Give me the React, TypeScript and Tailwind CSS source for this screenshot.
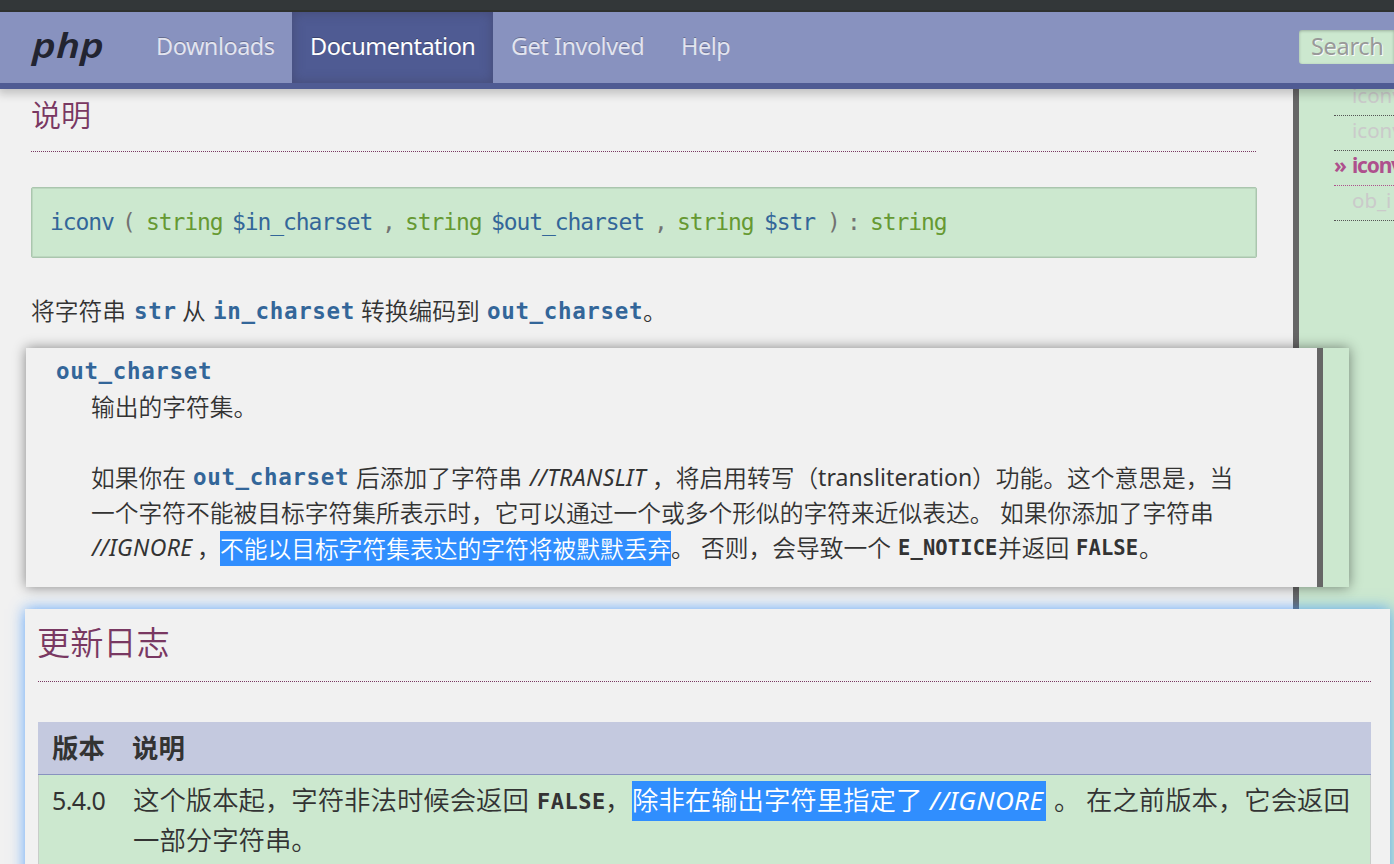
import React from "react";

type RunProps = { c?: string; children: React.ReactNode };

function Run({ c = "", children }: RunProps) {
  return <span className={"shrink-0 whitespace-pre " + c}>{children}</span>;
}

const cjk = "font-['Noto_Sans_CJK_SC',sans-serif]";
const latin = "font-['Noto_Sans',sans-serif]";
const mono = "font-['DejaVu_Sans_Mono',monospace]";
const body = cjk + " font-[350] text-[23.75px]";
const param = mono + " font-bold text-[22.5px] tracking-[0.65px] text-[#336699]";
const constant = mono + " font-bold text-[20.5px] tracking-[0.1px]";
const code = mono + " text-[23px] tracking-[-1.1px]";
const italic = latin + " italic font-normal";

function NavItem({ label, c }: { label: string; c: string }) {
  return (
    <a className={"flex h-[71px] shrink-0 items-center pb-[2px] pl-[18px] whitespace-nowrap text-[23.5px] [text-shadow:0_-1px_0_rgba(0,0,0,0.25)] " + latin + " " + c}>
      {label}
    </a>
  );
}

function Header() {
  return (
    <header className="relative z-10 shrink-0 shadow-[0_3px_9px_2px_rgba(0,0,0,0.2)]">
      <div className="h-3 border-b-2 border-[#2e312f] bg-[#333739]" />
      <nav className="flex h-[77px] border-b-[6px] border-[#4f5b93] bg-[#8892bf]">
        <div className="w-[138px] shrink-0 pl-[32px] font-['Noto_Sans',sans-serif] text-[35px] leading-[65px] font-semibold text-[#222431] italic">
          <span className="inline-block origin-left scale-x-[1.16]">php</span>
        </div>
        <NavItem label="Downloads" c="w-[154px] tracking-[-0.5px] text-[#e2e4ef]" />
        <NavItem label="Documentation" c="w-[201px] bg-[#4f5b93] tracking-[-0.5px] text-white shadow-[inset_0_0_12px_rgba(60,60,90,0.5)]" />
        <NavItem label="Get Involved" c="w-[170px] tracking-[-0.5px] text-[#e2e4ef]" />
        <NavItem label="Help" c="w-[100px] tracking-[-0.5px] text-[#e2e4ef]" />
        <div className="mt-[18px] ml-auto flex h-[34px] w-[95px] shrink-0 items-center rounded-l-[3px] bg-[#cce8cf] pl-3 shadow-[inset_0_1px_3px_rgba(0,0,0,0.25)]">
          <span className={"text-[23.5px] tracking-[-0.3px] text-[#999] [text-shadow:1px_1px_0_rgba(255,255,255,0.9)] " + latin}>Search</span>
        </div>
      </nav>
    </header>
  );
}

function Signature() {
  return (
    <div className={"mt-[35px] flex h-[71px] items-center rounded-[2px] border border-[#aac6ae] bg-[#cce8cf] pl-[18px] pb-[1px] text-[#737373] shadow-[inset_0_0_0_1px_#bcd7bf] " + code}>
      <Run c="w-[72px] text-[#336699]">iconv</Run>
      <Run c="w-[24px]">(</Run>
      <Run c="w-[86px] text-[#669933]">string</Run>
      <Run c="w-[150px] text-[#336699]">$in_charset</Run>
      <Run c="w-[23px]">,</Run>
      <Run c="w-[86px] text-[#669933]">string</Run>
      <Run c="w-[163px] text-[#336699]">$out_charset</Run>
      <Run c="w-[23px]">,</Run>
      <Run c="w-[87px] text-[#669933]">string</Run>
      <Run c="w-[63px] text-[#336699]">$str</Run>
      <Run c="w-[20px]">)</Run>
      <Run c="w-[23px]">:</Run>
      <Run c="text-[#669933]">string</Run>
    </div>
  );
}

function Sidebar() {
  const item = "flex h-[35px] items-center border-b border-dotted border-[#555] pb-[5px] pl-[18px] text-[#cacaca]";
  return (
    <aside className={"flex-1 overflow-hidden border-l-[6px] border-[#666] bg-[#cce8cf] pl-[35px] text-[20.5px] " + latin}>
      <div className="-mt-[8px] whitespace-nowrap">
        <div className={item}>iconv</div>
        <div className={item}>iconv</div>
        <div className="flex h-[35px] items-center border-b border-dotted border-[#ae508d] pb-[4px] text-[21px] font-bold tracking-[-1.2px] text-[#ae508d]">
          <span className="w-[18px] shrink-0">»</span>iconv
        </div>
        <div className={item}>ob_i</div>
      </div>
    </aside>
  );
}

function CharsetCard() {
  return (
    <section className="absolute top-[348px] left-[26px] z-20 flex h-[239px] w-[1323px] bg-[#f1f1f1] shadow-[0_0_12px_rgba(0,0,0,0.45)]">
      <div className={"w-[1291px] shrink-0 pt-[5px] pl-[30px] text-[#333] " + body}>
        <div className="flex h-[35px] items-center pt-[2px]">
          <Run c={param}>out_charset</Run>
        </div>
        <div className="pl-[35px]">
          <div className="flex h-[35px] items-center">
            <Run>输出的字符集。</Run>
          </div>
          <div className="mt-[36px] flex h-[35px] items-center">
            <Run c="w-[102px]">如果你在</Run>
            <Run c={"w-[163px] pt-[3px] " + param}>out_charset</Run>
            <Run c="w-[174px]">后添加了字符串</Run>
            <Run c={"w-[122px] pt-[2px] text-[23px] tracking-[0.4px] " + italic}>//TRANSLIT</Run>
            <Run c="w-[166px]">，将启用转写（</Run>
            <Run c={"w-[154px] pt-[1px] text-[23px] tracking-[0.1px] font-normal " + latin}>transliteration</Run>
            <Run>）功能。这个意思是，当</Run>
          </div>
          <div className="flex h-[35px] items-center">
            <Run c="w-[909px]">一个字符不能被目标字符集所表示时，它可以通过一个或多个形似的字符来近似表达。</Run>
            <Run>如果你添加了字符串</Run>
          </div>
          <div className="flex h-[35px] items-center">
            <Run c={"w-[106px] pt-[2px] pl-[1px] text-[23px] tracking-[0.4px] " + italic}>//IGNORE</Run>
            <Run c="w-[23px]">，</Run>
            <Run c="mt-[4px] h-[35px] w-[451px] bg-[#308efe] leading-[33px] text-white">不能以目标字符集表达的字符将被默默丢弃</Run>
            <Run c="w-[30px]">。</Run>
            <Run c="w-[197px]">否则，会导致一个</Run>
            <Run c={"w-[100px] pt-[3px] " + constant}>E_NOTICE</Run>
            <Run c="w-[78px]">并返回</Run>
            <Run c={"w-[63px] pt-[3px] " + constant}>FALSE</Run>
            <Run>。</Run>
          </div>
        </div>
      </div>
      <div className="w-[6px] bg-[#666]" />
      <div className="flex-1 bg-[#cce8cf]" />
    </section>
  );
}

function ChangelogCard() {
  return (
    <section className={"absolute top-[609px] left-[25px] z-30 h-[280px] w-[1365px] bg-[#f1f1f1] pr-[19px] pl-[13px] font-[350] text-[#333] shadow-[0_0_14px_rgba(48,142,254,0.75)] " + cjk}>
      <h2 className="-ml-px h-[73px] text-[33.2px] leading-[63px] text-[#793862]">更新日志</h2>
      <div className="-mt-px border-b border-dotted border-[#793862]" />
      <div className="mt-[40px] text-[26.4px]">
        <div className="flex h-[53px] items-center border-b border-[#8892bf] bg-[#c4c9df] pb-[2px] pl-[14px] font-bold">
          <Run c="w-[80px]">版本</Run>
          <Run>说明</Run>
        </div>
        <div className="flex h-[120px] border-x border-[#c8cdc9] bg-[#cce8cf] pt-[6px] pl-[13px]">
          <Run c={"w-[81px] text-[25px] leading-[38px] font-normal tracking-[-0.6px] " + latin}>5.4.0</Run>
          <div>
            <div className="flex h-[40px] items-center">
              <Run c="w-[404px] pb-[5px]">这个版本起，字符非法时候会返回</Run>
              <Run c={"w-[68px] text-[22px] tracking-[0.5px] font-bold " + mono}>FALSE</Run>
              <Run c="w-[27px] pb-[5px]">，</Run>
              <Run c="flex h-[40px] w-[414px] items-center bg-[#308efe] pb-[4px] text-white">
                <span className="w-[298px]">除非在输出字符里指定了</span>
                <span className={"pt-[3px] text-[26px] tracking-[0.4px] " + italic}>//IGNORE</span>
              </Run>
              <Run c="w-[40px] pb-[5px] pl-[8px]">。</Run>
              <Run c="pb-[5px]">在之前版本，它会返回</Run>
            </div>
            <div className="flex h-[40px] items-center pb-[5px]">
              <Run>一部分字符串。</Run>
            </div>
          </div>
        </div>
      </div>
    </section>
  );
}

export default function App() {
  return (
    <div className="relative flex h-[864px] w-[1394px] flex-col overflow-hidden bg-[#f1f1f1]">
      <Header />
      <div className="flex flex-1">
        <main className={"w-[1293px] shrink-0 pr-[36px] pl-[31px] text-[#333] " + body}>
          <h2 className="h-[63px] w-[1225px] border-b border-dotted border-[#793862] text-[30px] leading-[48px] text-[#793862]">说明</h2>
          <Signature />
          <div className="mt-[34px] flex h-[36px] items-center">
            <Run c="w-[103px]">将字符串</Run>
            <Run c={"w-[48px] pt-[4px] " + param}>str</Run>
            <Run c="w-[31px]">从</Run>
            <Run c={"w-[148px] pt-[4px] " + param}>in_charset</Run>
            <Run c="w-[126px]">转换编码到</Run>
            <Run c={"w-[156px] pt-[4px] " + param}>out_charset</Run>
            <Run>。</Run>
          </div>
        </main>
        <Sidebar />
      </div>
      <CharsetCard />
      <ChangelogCard />
    </div>
  );
}
